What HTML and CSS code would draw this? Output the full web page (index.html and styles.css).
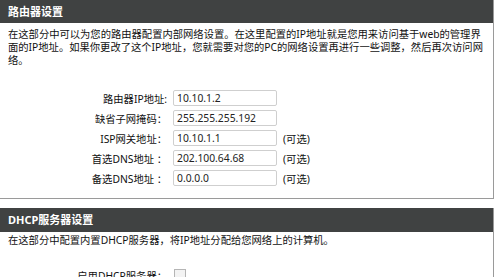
FILE: index.html
```html
<!DOCTYPE html>
<html lang="zh-CN">
<head>
<meta charset="utf-8">
<link rel="stylesheet" href="styles.css">
</head>
<body>
<div class="section first">
  <div class="head">路由器设置</div>
  <div class="desc">在这部分中可以为您的路由器配置内部网络设置。在这里配置的IP地址就是您用来访问基于web的管理界<br>面的IP地址。如果你更改了这个IP地址，您就需要对您的PC的网络设置再进行一些调整，然后再次访问网<br>络。</div>
  <div class="form">
    <label class="lbl">路由器IP地址:</label><div class="inp">10.10.1.2</div><span class="opt"></span>
    <label class="lbl">缺省子网掩码：</label><div class="inp">255.255.255.192</div><span class="opt"></span>
    <label class="lbl">ISP网关地址：</label><div class="inp">10.10.1.1</div><span class="opt">(可选)</span>
    <label class="lbl">首选DNS地址 ：</label><div class="inp">202.100.64.68</div><span class="opt">(可选)</span>
    <label class="lbl">备选DNS地址 ：</label><div class="inp">0.0.0.0</div><span class="opt">(可选)</span>
  </div>
</div>
<div class="section second">
  <div class="head">DHCP服务器设置</div>
  <div class="desc">在这部分中配置内置DHCP服务器，将IP地址分配给您网络上的计算机。</div>
  <div class="form">
    <label class="lbl">启用DHCP服务器：</label><div class="chk"></div><span class="opt"></span>
  </div>
</div>
</body>
</html>
```
FILE: styles.css
```css
html, body {
  margin: 0;
  padding: 0;
  background: #fff;
}
body {
  font-family: "Noto Sans", "Noto Sans CJK SC", sans-serif;
  font-size: 10.3px;
  color: #111;
  width: 499px;
  overflow: hidden;
}
.section {
  width: 494px;
  border-right: 1px solid #9a9a9a;
  border-bottom: 1px solid #9a9a9a;
  box-sizing: border-box;
}
.second {
  margin-top: 9px;
  border-bottom: none;
}
.head {
  background: #404242;
  color: #fff;
  font-weight: bold;
  font-size: 11px;
  height: 23px;
  line-height: 23px;
  padding-left: 8px;
}
.second .head {
  height: 24px;
  line-height: 24px;
}
.desc {
  padding: 5px 0 0 8px;
  line-height: 13px;
  height: 48px;
}
.second .desc {
  height: 28px;
  padding-top: 2px;
}
.form {
  display: grid;
  grid-template-columns: 167px 104px auto;
  column-gap: 6px;
  grid-auto-rows: 20px;
  align-items: center;
  padding: 12px 0 10px 0;
}
.second .form {
  padding: 3px 0 0 0;
}
.lbl {
  text-align: right;
  white-space: nowrap;
}
.inp {
  height: 16px;
  box-sizing: border-box;
  border: 1px solid #cfcfcf;
  border-radius: 2px;
  padding-left: 3px;
  line-height: 14px;
  color: #222;
}
.opt {
  padding-left: 0;
}
.chk {
  width: 10px;
  height: 10px;
  border: 1px solid #b5b5b5;
  background: #f3f3f3;
  margin-left: 1px;
}
```
